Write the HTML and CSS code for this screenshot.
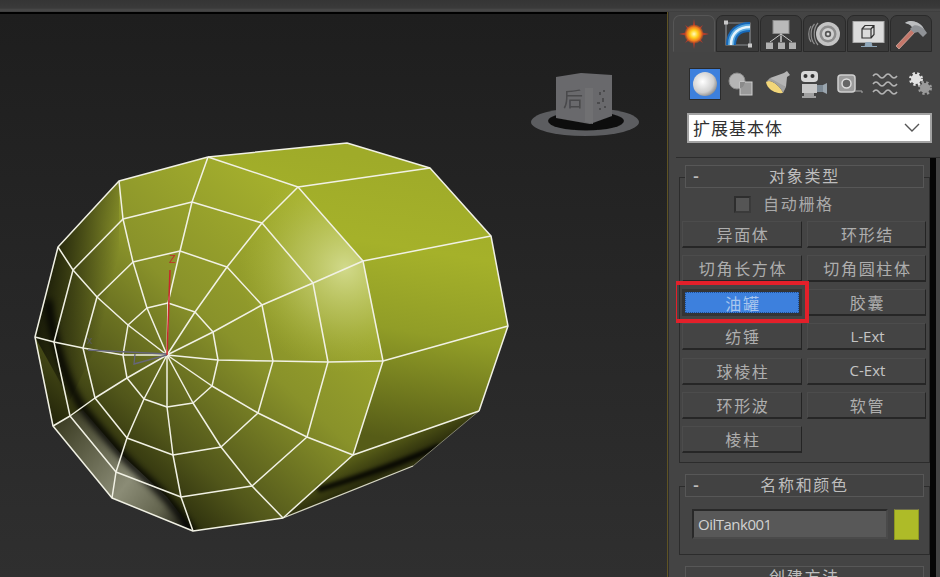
FILE: index.html
```html
<!DOCTYPE html>
<html lang="zh">
<head>
<meta charset="utf-8">
<title>3ds Max 油罐</title>
<link rel="stylesheet" href="styles.css">
</head>
<body>
<div class="topbar"></div>
<div class="workspace">
  <main class="viewport">
    <svg class="scene" viewBox="0 14 667 563" xmlns="http://www.w3.org/2000/svg">
      <defs>
        <linearGradient id="capFill" gradientUnits="userSpaceOnUse" x1="300" y1="200" x2="80" y2="445">
          <stop offset="0" stop-color="#a5b02d"/>
          <stop offset="0.45" stop-color="#89922a"/>
          <stop offset="0.8" stop-color="#51561a"/>
          <stop offset="1" stop-color="#24260a"/>
        </linearGradient>
        <linearGradient id="sideFill" gradientUnits="userSpaceOnUse" x1="440" y1="170" x2="395" y2="440">
          <stop offset="0" stop-color="#9fab29"/>
          <stop offset="0.3" stop-color="#a5b12a"/>
          <stop offset="0.6" stop-color="#919d27"/>
          <stop offset="1" stop-color="#565c17"/>
        </linearGradient>
        <radialGradient id="shine" gradientUnits="userSpaceOnUse" cx="345" cy="268" r="105">
          <stop offset="0" stop-color="#d4dc90" stop-opacity="0.95"/>
          <stop offset="0.5" stop-color="#c4cd70" stop-opacity="0.5"/>
          <stop offset="1" stop-color="#b0bb40" stop-opacity="0"/>
        </radialGradient>
        <linearGradient id="rimFill" gradientUnits="userSpaceOnUse" x1="60" y1="420" x2="190" y2="525">
          <stop offset="0" stop-color="#3c3d24"/>
          <stop offset="0.55" stop-color="#8b8c76"/>
          <stop offset="0.8" stop-color="#64654f"/>
          <stop offset="1" stop-color="#1a1a10"/>
        </linearGradient>
        <linearGradient id="leftDark" gradientUnits="userSpaceOnUse" x1="36" y1="320" x2="100" y2="335">
          <stop offset="0" stop-color="#000" stop-opacity="0.7"/>
          <stop offset="1" stop-color="#000" stop-opacity="0"/>
        </linearGradient>
        <linearGradient id="lowFill" gradientUnits="userSpaceOnUse" x1="350" y1="455" x2="375" y2="505">
          <stop offset="0" stop-color="#5e6419"/>
          <stop offset="0.55" stop-color="#2a2c0c"/>
          <stop offset="1" stop-color="#4a4c24"/>
        </linearGradient>
        <filter id="blur3" x="-30%" y="-30%" width="160%" height="160%"><feGaussianBlur stdDeviation="3.5"/></filter>
        <filter id="blur2" x="-30%" y="-30%" width="160%" height="160%"><feGaussianBlur stdDeviation="2"/></filter>
        <filter id="soft" x="-10%" y="-10%" width="120%" height="120%"><feGaussianBlur stdDeviation="0.6"/></filter>
        <clipPath id="capClip"><path d="M208 157 298 187 363 261 383 361 353 455 283 518 193 531 112 498 53 426 35 337 58 247 119 181Z"/></clipPath>
        <clipPath id="bodyClip"><path d="M208 157 347 143 430 168 491 236 508 326 479 411 413 466 283 518 193 531 112 498 53 426 35 337 58 247 119 181Z"/></clipPath>
      </defs>

      <!-- navigation cube -->
      <g class="gizmo" filter="url(#soft)">
        <ellipse cx="585" cy="122" rx="54" ry="14" fill="#5c5d60"/>
        <ellipse cx="586" cy="121" rx="38" ry="9.5" fill="#111"/>
        <path d="M556 77 581 73 612 75 612 116 590 124 556 118Z" fill="#69696c"/>
        <path d="M585 88 593 88 593 124 585 122Z" fill="#6f6f72"/>
        <text class="cube-label" x="563" y="107">后</text>
        <path d="M599 92h2v3h-2zM603 90h2v2h-2zM597 102h3v2h-3zM602 98h2v4h-2zM599 108h2v2h-2zM604 106h2v2h-2z" fill="#4b4b4d"/>
      </g>

      <!-- shaded body -->
      <g clip-path="url(#bodyClip)">
        <path d="M208 157 347 143 430 168 491 236 508 326 479 411 413 466 283 518 353 455 383 361 363 261 298 187Z" fill="url(#sideFill)"/>
        <path d="M208 157 298 187 363 261 383 361 353 455 283 518 193 531 112 498 53 426 35 337 58 247 119 181Z" fill="url(#capFill)"/>
        <path d="M353 455 479 411 413 466 283 518Z" fill="url(#lowFill)"/>
        <path d="M318 490 C350 480 395 466 440 446" stroke="#060602" stroke-width="5" fill="none" filter="url(#blur2)"/>
        <g clip-path="url(#capClip)">
          <circle cx="345" cy="268" r="105" fill="url(#shine)"/>
          <path d="M35 337 58 247 119 181 119 300 70 400Z" fill="url(#leftDark)"/>
          <path d="M53 426 112 498 193 531 167 497 120 453 83 410Z" fill="url(#rimFill)"/>
          <path d="M48 300 C52 345 70 390 84 410 C100 430 120 455 140 473 C160 490 178 510 195 535" stroke="#000" stroke-width="7" fill="none" filter="url(#blur3)"/>
        </g>
      </g>

      <!-- wireframe -->
      <path class="wire-faint" d="M413 466 479 411"/>
      <path class="wire-dim" d="M283 518 413 466"/>
      <g class="wire">
        <path d="M208 157 347 143 430 168 491 236 508 326 479 411"/>
        <path d="M283 518 193 531 112 498 53 426 35 337 58 247 119 181 208 157"/>
        <path d="M298 187 430 168M363 261 491 236M383 361 508 326M353 455 479 411"/>
        <path d="M208 157 298 187 363 261 383 361 353 455 283 518"/>
        <path d="M123 219 192 202 262 223 313 283 328 362 307 437 252 486 181 497 116 472 70 416 54 342 73 270Z"/>
        <path d="M133 262 180 251 227 267 262 305 273 361 258 413 221 447 173 455 127 438 95 398 83 348 97 297Z"/>
        <path d="M147 308 168 303 195 312 213 332 218 360 212 386 193 403 167 407 144 399 127 378 123 355 128 325Z"/>
        <path d="M167 355 168 303 180 251 192 202 208 157"/>
        <path d="M167 355 195 312 227 267 262 223 298 187"/>
        <path d="M167 355 213 332 262 305 313 283 363 261"/>
        <path d="M167 355 218 360 273 361 328 362 383 361"/>
        <path d="M167 355 212 386 258 413 307 437 353 455"/>
        <path d="M167 355 193 403 221 447 252 486 283 518"/>
        <path d="M167 355 167 407 173 455 181 497 193 531"/>
        <path d="M167 355 144 399 127 438 116 472 112 498"/>
        <path d="M167 355 127 378 95 398 70 416 53 426"/>
        <path d="M167 355 123 355 83 348 54 342 35 337"/>
        <path d="M167 355 128 325 97 297 73 270 58 247"/>
        <path d="M167 355 147 308 133 262 123 219 119 181"/>
      </g>

      <!-- axis tripod -->
      <path class="axis-grey" d="M167 354 88 350M167 355 134 364 135 354"/>
      <text class="axis-x" x="87" y="344">x</text>
      <path class="axis-red" d="M167 355 170 270"/>
      <text class="axis-z" x="169" y="263">Z</text>
    </svg>
  </main>

  <aside class="panel">
    <nav class="tabs">
      <div class="tab tab-active">
        <svg class="tab-icon" viewBox="-18 -17 36 34">
          <defs>
            <radialGradient id="sun"><stop offset="0" stop-color="#fffbc0"/><stop offset="0.4" stop-color="#ffd21e"/><stop offset="0.75" stop-color="#f07c1e"/><stop offset="1" stop-color="#c8461e" stop-opacity="0.4"/></radialGradient>
          </defs>
          <path d="M0-15 2-3 15 0 2 3 0 15-2 3-15 0-2-3Z" fill="#b03c2c"/>
          <path d="M-9-9 0-3 9-9 3 0 9 9 0 3-9 9-3 0Z" fill="#b03c2c"/>
          <circle r="9.500" fill="url(#sun)"/>
        </svg>
      </div>
      <div class="tab">
        <svg class="tab-icon" viewBox="-18 -17 36 34">
          <path d="M-12-11V11H12V-11Z" fill="none" stroke="#8a8e92" stroke-width="1.200"/>
          <path d="M-7 11C-7-1 1-7 12-7" fill="none" stroke="#1768b8" stroke-width="10"/>
          <path d="M-7 11C-7-1 1-7 12-7" fill="none" stroke="#5aaae0" stroke-width="6"/>
          <path d="M-7 11C-7-1 1-7 12-7" fill="none" stroke="#e4f3fb" stroke-width="2.500"/>
          <path d="M-14-13.500h4v4h-4zM10 9.500h4v4h-4z" fill="#c8c8c8"/>
        </svg>
      </div>
      <div class="tab">
        <svg class="tab-icon" viewBox="-18 -17 36 34">
          <rect x="-8" y="-13.500" width="16" height="13" fill="#b9b9b9" stroke="#8a8a8a"/>
          <path d="M0-.5V8M-11 8 0 0 11 8M0 2V8" fill="none" stroke="#c8c8c8" stroke-width="1"/>
          <path d="M-15 8.500h7v6.500h-7zM-3 8.500h7v6.500h-7zM8 8.500h7v6.500h-7z" fill="#b0b0b0"/>
        </svg>
      </div>
      <div class="tab">
        <svg class="tab-icon" viewBox="-18 -17 36 34">
          <path d="M-6-11C-11-5-11 5-6 11M-9.500-10C-14-5-14 5-9.500 10M-13-8C-16-4-16 4-13 8" fill="none" stroke="#8f8f8f" stroke-width="1.200"/>
          <circle cx="4" cy="0" r="12" fill="#c4c4c4"/>
          <circle cx="4" cy="0" r="8.500" fill="#8d8d8d"/>
          <circle cx="4" cy="0" r="6" fill="#cfcfcf"/>
          <circle cx="4" cy="0" r="3.200" fill="#555"/>
          <circle cx="4" cy="0" r="1.500" fill="#ddd"/>
        </svg>
      </div>
      <div class="tab">
        <svg class="tab-icon" viewBox="-18 -17 36 34">
          <rect x="-15" y="-12.500" width="31" height="21" fill="#dcdcdc" stroke="#a8a8a8"/>
          <path d="M-6-5h9v9h-9zM-6-5-3-8.500H6v9L3 4M3-5 6-8.500" fill="none" stroke="#333" stroke-width="1.200"/>
          <path d="M-2 8.500h5l1 3h-7zM-7 12.500H9" stroke="#8fa6b8" fill="#8fa6b8" stroke-width="1"/>
        </svg>
      </div>
      <div class="tab">
        <svg class="tab-icon" viewBox="-18 -17 36 34">
          <path d="M-15 12-12 15 5-3 2-6Z" fill="#c4776a" stroke="#dcb8ac" stroke-width=".7"/>
          <path d="M-6-11C0-15 7-12 11-8L16-1 12 3 7-2 3-1-1-5 1-7C-1-10-3-10-6-11Z" fill="#8f9296"/>
          <path d="M-6-11C0-15 7-12 11-8L13-5C8-9 3-10 1-7-1-10-3-10-6-11Z" fill="#bcbec0"/>
        </svg>
      </div>
    </nav>

    <div class="tool-row">
      <div class="tool tool-active">
        <svg class="tool-icon" viewBox="-16 -16 32 32">
          <defs><radialGradient id="ball" cx="0.4" cy="0.4" r="0.65"><stop offset="0" stop-color="#fff"/><stop offset="0.7" stop-color="#cfcfcf"/><stop offset="1" stop-color="#8b8b8b"/></radialGradient></defs>
          <circle r="12" fill="url(#ball)"/>
        </svg>
      </div>
      <div class="tool">
        <svg class="tool-icon" viewBox="-16 -16 32 32">
          <circle cx="-4" cy="-3" r="8" fill="#b5b5b5" stroke="#8c8c8c"/>
          <rect x="-1" y="-2" width="12" height="13" fill="#a9a9a9" fill-opacity=".85" stroke="#d0d0d0"/>
          <path d="M-1-2H4C4-.5 3 2 1 3.500L-1 4.500Z" fill="#8a8a8a"/>
        </svg>
      </div>
      <div class="tool">
        <svg class="tool-icon" viewBox="-16 -16 32 32">
          <path d="M7-11 10-13 13-9 10-7 9 3C3 2-4-2-7-6Z" fill="#b5b5b5"/>
          <path d="M-11-2C-6-6 4 3 6 9-2 10-10 5-11-2Z" fill="#f2d679"/>
          <path d="M-7-6 9 3 6 9C4 3-6-6-11-2Z" fill="#a2a2a2"/>
        </svg>
      </div>
      <div class="tool">
        <svg class="tool-icon" viewBox="-16 -16 32 32">
          <rect x="-12" y="-13" width="17" height="11" rx="4" fill="#d8d8d8"/>
          <circle cx="-7.500" cy="-8" r="2" fill="#333"/><circle cx="-.5" cy="-8" r="2" fill="#333"/>
          <rect x="-11" y="0" width="15" height="9" fill="#c8c8c8"/>
          <rect x="4" y="1" width="6" height="7" fill="#7d8a95"/>
          <path d="M10 1 14-1V10L10 8Z" fill="#9aa5ae"/>
          <path d="M-9 9h10v3h-10zM-11 12h14v2h-14z" fill="#a0a0a0"/>
        </svg>
      </div>
      <div class="tool">
        <svg class="tool-icon" viewBox="-16 -16 32 32">
          <rect x="-11" y="-9" width="17" height="17" rx="3" fill="#9b9b9b" stroke="#cfcfcf" stroke-width="1.500"/>
          <circle cx="-2.500" cy="-.5" r="4.500" fill="#666" stroke="#ddd" stroke-width="1.500"/>
          <path d="M6 7H13V9" fill="none" stroke="#a8a8a8"/>
        </svg>
      </div>
      <div class="tool">
        <svg class="tool-icon" viewBox="-16 -16 32 32">
          <path d="M-12-8Q-9-12-6-8T0-8 6-8 12-8M-12 0Q-9-4-6 0T0 0 6 0 12 0M-12 8Q-9 4-6 8T0 8 6 8 12 8" fill="none" stroke="#b4b4b4" stroke-width="1.600"/>
        </svg>
      </div>
      <div class="tool">
        <svg class="tool-icon" viewBox="-16 -16 32 32">
          <circle class="gear-dark" cx="4" cy="4" r="5"/>
          <circle class="gear-light" cx="-5" cy="-5" r="5"/>
        </svg>
      </div>
    </div>

    <div class="dropdown">
      <span>扩展基本体</span>
      <svg class="chevron" viewBox="0 0 16 9"><path d="M1 1 8 8 15 1" fill="none" stroke="#555" stroke-width="1.400"/></svg>
    </div>

    <div class="rollouts">
      <div class="rollout-list">
        <section class="rollout">
          <header class="rollout-head"><span class="minus">-</span><span class="head-title">对象类型</span></header>
          <div class="rollout-body types">
            <div class="check-row"><span class="checkbox"></span><span class="check-label">自动栅格</span></div>
            <div class="btn-grid">
              <button class="btn">异面体</button>
              <button class="btn">环形结</button>
              <button class="btn">切角长方体</button>
              <button class="btn">切角圆柱体</button>
              <div class="btn-wrap"><button class="btn btn-active">油罐</button><span class="callout"></span></div>
              <button class="btn">胶囊</button>
              <button class="btn">纺锤</button>
              <button class="btn btn-latin">L-Ext</button>
              <button class="btn">球棱柱</button>
              <button class="btn btn-latin">C-Ext</button>
              <button class="btn">环形波</button>
              <button class="btn">软管</button>
              <button class="btn">棱柱</button>
            </div>
          </div>
        </section>
        <section class="rollout">
          <header class="rollout-head"><span class="minus">-</span><span class="head-title">名称和颜色</span></header>
          <div class="rollout-body name-body">
            <div class="name-field">OilTank001</div>
            <div class="swatch"></div>
          </div>
        </section>
        <section class="rollout">
          <header class="rollout-head"><span class="minus"></span><span class="head-title">创建方法</span></header>
        </section>
      </div>
      <div class="scrollbar"></div>
    </div>
  </aside>
</div>
</body>
</html>
```
FILE: styles.css
```css
* { box-sizing: border-box; }

html, body {
  margin: 0;
  height: 577px;
  overflow: hidden;
  background: #444;
}

body {
  display: flex;
  flex-direction: column;
  font-family: "Noto Sans CJK SC", "Liberation Sans", sans-serif;
}

.topbar {
  height: 12px;
  flex: none;
  background: linear-gradient(#353535 0, #3a3a3a 8px, #4a4a4a 10px, #3b3b3b 12px);
}

.workspace {
  flex: 1;
  display: flex;
  min-height: 0;
}

.viewport {
  width: 667px;
  flex: none;
  border-top: 2px solid #000;
  background: linear-gradient(#1e1e1e, #2f2f2f);
}

.scene { display: block; width: 667px; height: 563px; }

.wire path {
  fill: none;
  stroke: #f1f1e4;
  stroke-width: 1.5;
  stroke-linejoin: round;
}

.wire-dim { fill: none; stroke: #d6d6c4; stroke-width: 1.3; }
.wire-faint { fill: none; stroke: #8a8a78; stroke-width: 0.9; }

.gear-light { fill: #e2e2e2; stroke: #e2e2e2; stroke-width: 4; stroke-dasharray: 2 2; }
.gear-dark { fill: #9a9a9a; stroke: #9a9a9a; stroke-width: 4; stroke-dasharray: 2 2; }

.cube-label {
  font-size: 20px;
  fill: #48484b;
  font-family: "Noto Sans CJK SC", sans-serif;
}

.axis-grey { fill: none; stroke: #66667a; stroke-width: 1.3; }
.axis-red { fill: none; stroke: #c8272b; stroke-width: 1.5; }
.axis-x { font-size: 11px; fill: #5a5a5e; font-family: "Liberation Sans", sans-serif; }
.axis-z { font-size: 11px; fill: #c23028; font-family: "Liberation Sans", sans-serif; }

.panel {
  flex: 1;
  display: flex;
  flex-direction: column;
  min-width: 0;
  background: #444;
  border-left: 1px solid #5f5324;
  box-shadow: inset 1px 0 0 #2d2d2d;
}

.tabs {
  display: flex;
  gap: 1px;
  height: 37px;
  margin: 3px 0 0 5px;
  flex: none;
}

.tab {
  width: 42.4px;
  height: 37px;
  display: flex;
  align-items: center;
  justify-content: center;
  background: #3a3a3a;
  border: 1px solid #2a2a2a;
  border-radius: 7px 7px 0 0;
}

.tab-active {
  background: #454545;
  border-color: #565656;
  border-bottom-color: #454545;
}

.tab-icon { width: 36px; height: 34px; flex: none; }

.tool-row {
  display: flex;
  gap: 4px;
  margin: 16px 0 0 21px;
  flex: none;
}

.tool {
  width: 32px;
  height: 32px;
  display: flex;
}

.tool-active {
  background: #3d80dd;
  border: 1px solid #2b2b2b;
}

.tool-icon { width: 32px; height: 32px; flex: none; }
.tool-active .tool-icon { margin: -1px; }

.dropdown {
  width: 245px;
  height: 30px;
  margin: 13px 0 0 19px;
  padding: 0 10px 2px 4px;
  flex: none;
  display: flex;
  align-items: center;
  justify-content: space-between;
  background: #fff;
  border: 2px solid #a2a2a2;
  color: #303030;
  font-size: 17px;
  letter-spacing: 1px;
}

.chevron { width: 16px; height: 9px; }

.rollouts {
  flex: 1;
  display: flex;
  min-height: 0;
  margin: 14px 0 0 8px;
  border-top: 1px solid #2d2d2d;
  overflow: hidden;
}

.rollout-list {
  width: 254px;
  flex: none;
  padding: 7px 0 0 3px;
}

.scrollbar {
  width: 6px;
  flex: none;
  background: #060606;
}

.rollout { margin-bottom: 11px; }

.rollout-head {
  position: relative;
  z-index: 1;
  height: 23px;
  margin: 0 6px 0 6px;
  display: grid;
  grid-template-columns: 1fr auto 1fr;
  align-items: center;
  padding: 0 7px 3px;
  background: #424242;
  border: 1px solid #575757;
  color: #bdbdbd;
  font-size: 16px;
  letter-spacing: 1.7px;
  line-height: 1;
}

.minus { font-weight: 700; }

.rollout-body {
  margin-top: -11px;
  border: 1px solid #2c2c2c;
}

.types { padding: 17px 0 9px 2px; }

.check-row {
  display: flex;
  align-items: center;
  height: 18px;
  margin-bottom: 8px;
  padding-left: 52px;
  color: #a9a9a9;
  font-size: 16px;
  letter-spacing: 1.7px;
}

.check-label { margin-bottom: 2px; }

.checkbox {
  width: 17px;
  height: 17px;
  margin-right: 12px;
  background: #555;
  border: 2px solid #2e2e2e;
  border-right-color: #3a3a3a;
  border-bottom-color: #3a3a3a;
}

.btn-grid {
  display: grid;
  grid-template-columns: 120px 119px;
  grid-auto-rows: 27px;
  column-gap: 5px;
  row-gap: 7.17px;
}

.btn {
  padding: 0 0 0 2px;
  margin: 0;
  font: inherit;
  font-size: 16px;
  letter-spacing: 1.7px;
  line-height: 1;
  color: #aeaeae;
  background: #444;
  border: 1px solid #4c4c4c;
  border-right: 1px solid #242424;
  border-bottom: 2px solid #262626;
}

.btn-latin {
  font-family: "Open Sans", "Liberation Sans", sans-serif;
  font-size: 15px;
  letter-spacing: 0;
  color: #c4c4c4;
}

.btn-wrap { position: relative; display: flex; }

.btn-active {
  width: 100%;
  color: #a8c6ee;
  background: #3d80dd;
  border: 3px solid #343434;
  outline: 1px dotted #1f4f96;
  outline-offset: -4px;
}

.callout {
  position: absolute;
  top: -8px;
  right: -7px;
  bottom: -7px;
  left: -9px;
  border: 4px solid #e3202a;
  pointer-events: none;
}

.name-body {
  display: flex;
  align-items: flex-start;
  gap: 6px;
  padding: 22px 8px 14px 12px;
}

.name-field {
  width: 196px;
  height: 30px;
  padding: 0 4px;
  display: flex;
  align-items: center;
  background: #585858;
  border: 2px solid #292929;
  border-right-color: #4a4a4a;
  border-bottom-color: #4a4a4a;
  color: #d2d2d2;
  font-family: "Open Sans", "Liberation Sans", sans-serif;
  font-size: 15px;
  letter-spacing: -0.5px;
}

.swatch {
  width: 25px;
  height: 31px;
  background: #aebb28;
  border: 1px solid #8d9722;
  border-top-color: #6d6d48;
}
```
